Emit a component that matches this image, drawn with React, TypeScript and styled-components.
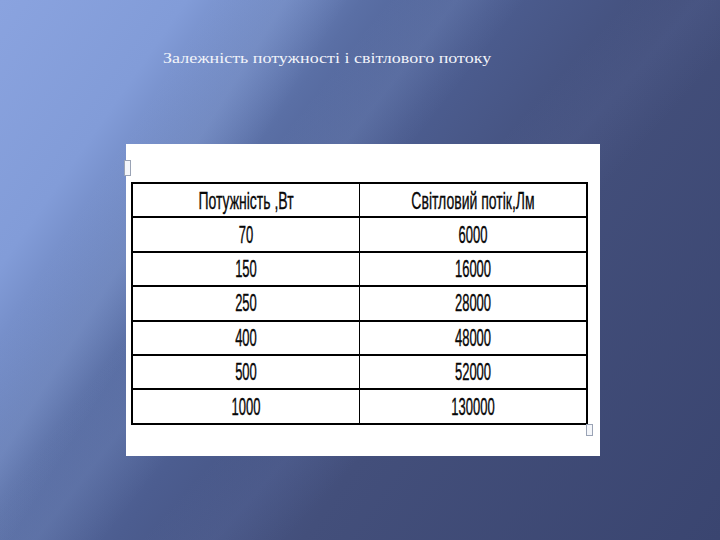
import React from 'react';
import styled, { createGlobalStyle } from 'styled-components';

const GlobalStyle = createGlobalStyle`
  html, body {
    margin: 0;
    padding: 0;
  }
  body {
    width: 720px;
    height: 540px;
    overflow: hidden;
  }
`;

const Slide = styled.div`
  position: relative;
  width: 720px;
  height: 540px;
  box-sizing: border-box;
  padding-top: 48px;
  background:
    linear-gradient(122deg, rgba(255,255,255,0) 20%, rgba(170,195,240,0.16) 27%, rgba(255,255,255,0) 33%),
    linear-gradient(128deg, rgba(255,255,255,0) 34%, rgba(150,175,225,0.14) 40%, rgba(255,255,255,0) 46%),
    linear-gradient(132deg, rgba(255,255,255,0) 52%, rgba(120,140,200,0.10) 58%, rgba(255,255,255,0) 64%),
    linear-gradient(125deg, #8aa3df 0%, #829cd8 17%, #6e86c0 25%, #5a6fa5 33%, #4c5d90 45%, #434f7b 62%, #3a4570 100%);
  overflow: hidden;
`;

const Title = styled.div`
  margin-left: 163px;
  font-family: "Liberation Serif", "Times New Roman", serif;
  font-size: 15px;
  color: #f2f4fa;
  line-height: 20px;
  white-space: nowrap;
  transform: scaleX(1.2);
  transform-origin: left center;
  width: max-content;
`;

const Panel = styled.div`
  position: relative;
  margin: 76px 0 0 126px;
  width: 474px;
  height: 312px;
  background: #ffffff;
  box-sizing: border-box;
  padding: 38px 12px 0 5px;
`;

const Handle = styled.div<{ $corner: 'top' | 'bottom' }>`
  position: absolute;
  width: 5px;
  height: ${(p) => (p.$corner === 'top' ? '14px' : '10px')};
  border: 1px solid #9aa3b5;
  background: #f4f6fa;
  ${(p) =>
    p.$corner === 'top'
      ? 'left: -2px; top: 16px;'
      : 'right: 7px; top: 280px;'}
`;

const Table = styled.table`
  width: 457px;
  border-collapse: collapse;
  table-layout: fixed;
  border: 2px solid #000;
`;

const Row = styled.tr`
  height: 34.4px;
`;

const Cell = styled.td`
  border-top: 2px solid #000;
  border-bottom: 2px solid #000;
  border-left: 1px solid #000;
  border-right: 1px solid #000;
  text-align: center;
  vertical-align: middle;
  padding: 0;
  overflow: hidden;
`;

const CellText = styled.span<{ $head?: boolean }>`
  display: inline-block;
  font-family: "Liberation Sans", Arial, sans-serif;
  font-size: ${(p) => (p.$head ? '14px' : '13px')};
  color: #0a0a0a;
  transform: scaleY(${(p) => (p.$head ? 1.7 : 1.83)});
  line-height: 14px;
  -webkit-text-stroke: 0.2px #000;
`;

const rows: [string, string][] = [
  ['70', '6000'],
  ['150', '16000'],
  ['250', '28000'],
  ['400', '48000'],
  ['500', '52000'],
  ['1000', '130000'],
];

const App = () => {
  return (
    <Slide>
      <GlobalStyle />
      <Title>Залежність потужності і світлового потоку</Title>
      <Panel>
        <Handle $corner="top" />
        <Table>
          <tbody>
            <Row>
              <Cell><CellText $head>Потужність ,Вт</CellText></Cell>
              <Cell><CellText $head>Світловий потік,Лм</CellText></Cell>
            </Row>
            {rows.map(([w, lm]) => (
              <Row key={w}>
                <Cell><CellText>{w}</CellText></Cell>
                <Cell><CellText>{lm}</CellText></Cell>
              </Row>
            ))}
          </tbody>
        </Table>
        <Handle $corner="bottom" />
      </Panel>
    </Slide>
  );
};

export default App;
